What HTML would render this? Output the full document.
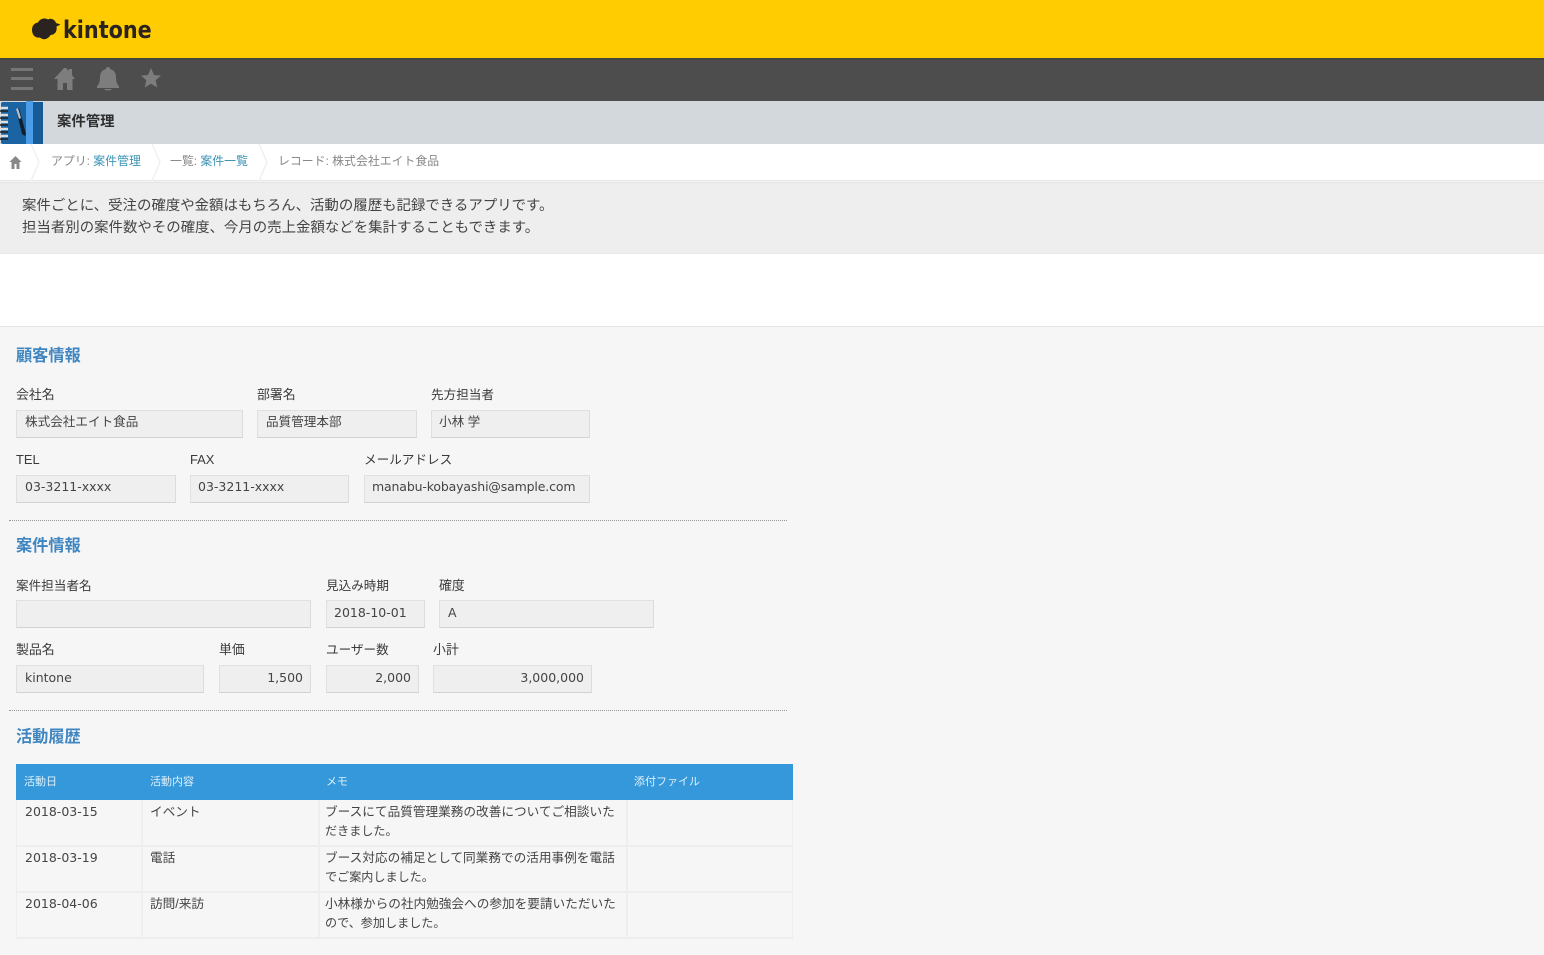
<!DOCTYPE html>
<html lang="ja">
<head>
<meta charset="utf-8">
<title>kintone</title>
<style>
html,body{margin:0;padding:0;background:#f6f6f6}
body{width:1544px;height:955px;position:relative;overflow:hidden;font-family:"Liberation Sans","Noto Sans CJK JP",sans-serif;color:#333}
div,span,svg{position:absolute;box-sizing:border-box}
.t{white-space:nowrap;font-size:12.9px;line-height:18px;color:#3a3a3a}
.k{font-size:12.6px}
.h{white-space:nowrap;font-size:16.2px;line-height:22px;color:#3f86c0;font-weight:700;left:16px}
.i{height:28px;background:#efefef;border:1px solid #e0e0e0;border-bottom:1px solid #d2d2d2;border-right:1px solid #dcdcdc}
.v{white-space:nowrap;font-family:"DejaVu Sans","Noto Sans CJK JP",sans-serif;font-size:12.5px;line-height:18px;color:#444}
.j{font-family:"Liberation Sans","Noto Sans CJK JP",sans-serif;font-size:12.6px}
.r{text-align:right}
.dot{left:9px;width:778px;height:1px;border-top:1px dotted #999}
.th{white-space:nowrap;color:#dff0fa;font-size:11px;line-height:16px;top:774px}
.c{white-space:nowrap;font-size:12.65px;line-height:19px;color:#444}
.c2{font-size:12.1px}
.l{background:#eeeeee}
.b{white-space:nowrap;font-size:11.9px;line-height:16px;top:153px;color:#888}
.b b{font-weight:400;color:#3a93b5}
</style>
</head>
<body>
<div style="left:0;top:0;width:1544px;height:58px;background:#fecc00"></div>
<svg style="left:31px;top:17px" width="30" height="24" viewBox="0 0 30 24"><path fill="#2b2320" d="M1 13C1 8 4 6 7 5.500C9 1.500 14 .5 17 2.500C20 .5 24 2.500 25 6L29.500 7.500L25.500 9.500C26.500 15 23 18 19.500 18C17 22.500 12 23.500 9 20.500C4 21.500 1 17.500 1 13Z"/></svg>
<div style="left:63px;top:14px;font-size:24px;line-height:32px;font-weight:700;color:#2b2320;white-space:nowrap;font-family:'DejaVu Sans',sans-serif;transform:scaleX(.865);transform-origin:left">kintone</div>

<div style="left:0;top:58px;width:1544px;height:43px;background:#4d4d4d;border-top:2px solid #45453f"></div>
<svg style="left:9px;top:66px" width="160" height="26" viewBox="0 0 160 26">
<path fill="#767676" d="M2 2h22v3H2zM2 11h22v3H2zM2 21h22v3H2z"/>
<path fill="#7d7d7d" d="M55 2h2l3 3V3h3v6l3 4h-2.500v11h-5.500v-7h-4v7h-5.500V13H45Z"/>
<path fill="#7d7d7d" d="M99 1a2 2 0 0 1 2 2c4 1 6 4 6 8 0 5 1 7 3 9v2H88v-2c2-2 3-4 3-9 0-4 2-7 6-8a2 2 0 0 1 2-2ZM95 23h8c-1 2-7 2-8 0Z"/>
<path fill="#7d7d7d" d="M142 2l3 7 7 .6-5.400 4.700 1.700 7.200-6.300-3.800-6.300 3.800 1.700-7.200-5.400-4.700 7-.6Z"/>
</svg>

<div style="left:0;top:101px;width:1544px;height:43px;background:#d3d8dc"></div>
<svg style="left:0;top:101px" width="44" height="43" viewBox="0 0 44 43">
<rect x="1" y="1" width="42" height="42" rx="2" fill="#1a64a4"/>
<rect x="26" y="0" width="7" height="43" fill="#4d9ce8"/>
<rect x="33" y="1" width="10" height="42" fill="#175a98"/>
<path d="M0 7h8M0 14h8M0 21h8M0 28h8M0 35h8" stroke="#ddd" stroke-width="2.500"/>
<path d="M0 10h8M0 17h8M0 24h8M0 31h8M0 38h8" stroke="#222" stroke-width="1.500"/>
<path d="M16 8l3-1 7 26-1 2-3-2Z" fill="#12202c"/>
<path d="M16 8l2-1 3 10-2 1Z" fill="#b8c0c8"/>
</svg>
<div class="t" style="left:57px;top:113px;font-size:14.400px;font-weight:700;color:#2e2e2e">案件管理</div>

<div style="left:0;top:144px;width:1544px;height:37px;background:#fff;border-bottom:1px solid #e6e6e6"></div>
<svg style="left:0;top:144px" width="280" height="37" viewBox="0 0 280 37" fill="none" stroke="#f0f0f0" stroke-width="1.500">
<path d="M31 0l8 18-8 19M152 0l8 18-8 19M259 0l8 18-8 19"/>
<path fill="#888" stroke="none" d="M15.500 12l6 6h-2v7h-3v-5h-2v5h-3v-7h-2Z"/>
</svg>
<div class="b" style="left:51px">アプリ: <b>案件管理</b></div>
<div class="b" style="left:170px">一覧: <b>案件一覧</b></div>
<div class="b" style="left:278px">レコード: 株式会社エイト食品</div>

<div style="left:0;top:182px;width:1544px;height:72px;background:#eeeeee;border-top:1px solid #e3e3e3;border-bottom:1px solid #e9e9e9"></div>
<div class="t" style="left:22px;top:196px;font-size:14.430px;line-height:20px;color:#444">案件ごとに、受注の確度や金額はもちろん、活動の履歴も記録できるアプリです。</div>
<div class="t" style="left:22px;top:218px;font-size:14.430px;line-height:20px;color:#444">担当者別の案件数やその確度、今月の売上金額などを集計することもできます。</div>

<div style="left:0;top:254px;width:1544px;height:73px;background:#fff;border-bottom:1px solid #e4e4e4"></div>

<div class="h" style="top:345px">顧客情報</div>
<div class="t" style="left:16px;top:386px">会社名</div>
<div class="t" style="left:257px;top:386px">部署名</div>
<div class="t k" style="left:431px;top:386px">先方担当者</div>
<div class="i" style="left:16px;top:410px;width:227px"></div>
<div class="i" style="left:257px;top:410px;width:160px"></div>
<div class="i" style="left:431px;top:410px;width:159px"></div>
<div class="v j" style="left:25px;top:413px">株式会社エイト食品</div>
<div class="v j" style="left:266px;top:413px">品質管理本部</div>
<div class="v j" style="left:439px;top:413px">小林 学</div>

<div class="t" style="left:16px;top:451px">TEL</div>
<div class="t" style="left:190px;top:451px">FAX</div>
<div class="t k" style="left:364px;top:451px">メールアドレス</div>
<div class="i" style="left:16px;top:475px;width:160px"></div>
<div class="i" style="left:190px;top:475px;width:159px"></div>
<div class="i" style="left:364px;top:475px;width:226px"></div>
<div class="v" style="left:25px;top:478px">03-3211-xxxx</div>
<div class="v" style="left:198px;top:478px">03-3211-xxxx</div>
<div class="v" style="left:372px;top:478px;letter-spacing:-.15px">manabu-kobayashi@sample.com</div>

<div class="dot" style="top:520px"></div>

<div class="h" style="top:535px">案件情報</div>
<div class="t k" style="left:16px;top:577px">案件担当者名</div>
<div class="t k" style="left:326px;top:577px">見込み時期</div>
<div class="t" style="left:439px;top:577px">確度</div>
<div class="i" style="left:16px;top:600px;width:295px"></div>
<div class="i" style="left:326px;top:600px;width:99px"></div>
<div class="i" style="left:439px;top:600px;width:215px"></div>
<div class="v" style="left:334px;top:604px">2018-10-01</div>
<div class="v" style="left:448px;top:604px">A</div>

<div class="t" style="left:16px;top:641px">製品名</div>
<div class="t" style="left:219px;top:641px">単価</div>
<div class="t k" style="left:326px;top:641px">ユーザー数</div>
<div class="t" style="left:433px;top:641px">小計</div>
<div class="i" style="left:16px;top:665px;width:188px"></div>
<div class="i" style="left:219px;top:665px;width:92px"></div>
<div class="i" style="left:326px;top:665px;width:93px"></div>
<div class="i" style="left:433px;top:665px;width:159px"></div>
<div class="v" style="left:25px;top:669px">kintone</div>
<div class="v r" style="left:219px;top:669px;width:84px">1,500</div>
<div class="v r" style="left:326px;top:669px;width:85px">2,000</div>
<div class="v r" style="left:433px;top:669px;width:151px">3,000,000</div>

<div class="dot" style="top:710px"></div>

<div class="h" style="top:726px">活動履歴</div>

<div style="left:16px;top:764px;width:777px;height:36px;background:#3498db"></div>
<div class="th" style="left:24px">活動日</div>
<div class="th" style="left:150px">活動内容</div>
<div class="th" style="left:326px">メモ</div>
<div class="th" style="left:634px">添付ファイル</div>

<div class="l" style="left:16px;top:800px;width:1px;height:138px"></div>
<div class="l" style="left:141px;top:800px;width:2px;height:138px"></div>
<div class="l" style="left:318px;top:800px;width:2px;height:138px"></div>
<div class="l" style="left:626px;top:800px;width:2px;height:138px"></div>
<div class="l" style="left:792px;top:800px;width:1px;height:138px"></div>
<div class="l" style="left:16px;top:845px;width:777px;height:2px"></div>
<div class="l" style="left:16px;top:891px;width:777px;height:2px"></div>
<div class="l" style="left:16px;top:937px;width:777px;height:2px"></div>

<div class="v" style="left:25px;top:803px">2018-03-15</div>
<div class="c" style="left:150px;top:803px">イベント</div>
<div class="c" style="left:325px;top:803px">ブースにて品質管理業務の改善についてご相談いた</div>
<div class="c c2" style="left:325px;top:822px">だきました。</div>

<div class="v" style="left:25px;top:849px">2018-03-19</div>
<div class="c" style="left:150px;top:849px">電話</div>
<div class="c" style="left:325px;top:849px">ブース対応の補足として同業務での活用事例を電話</div>
<div class="c c2" style="left:325px;top:868px">でご案内しました。</div>

<div class="v" style="left:25px;top:895px">2018-04-06</div>
<div class="c" style="left:150px;top:895px">訪問/来訪</div>
<div class="c" style="left:325px;top:895px">小林様からの社内勉強会への参加を要請いただいた</div>
<div class="c c2" style="left:325px;top:914px">ので、参加しました。</div>
</body>
</html>
